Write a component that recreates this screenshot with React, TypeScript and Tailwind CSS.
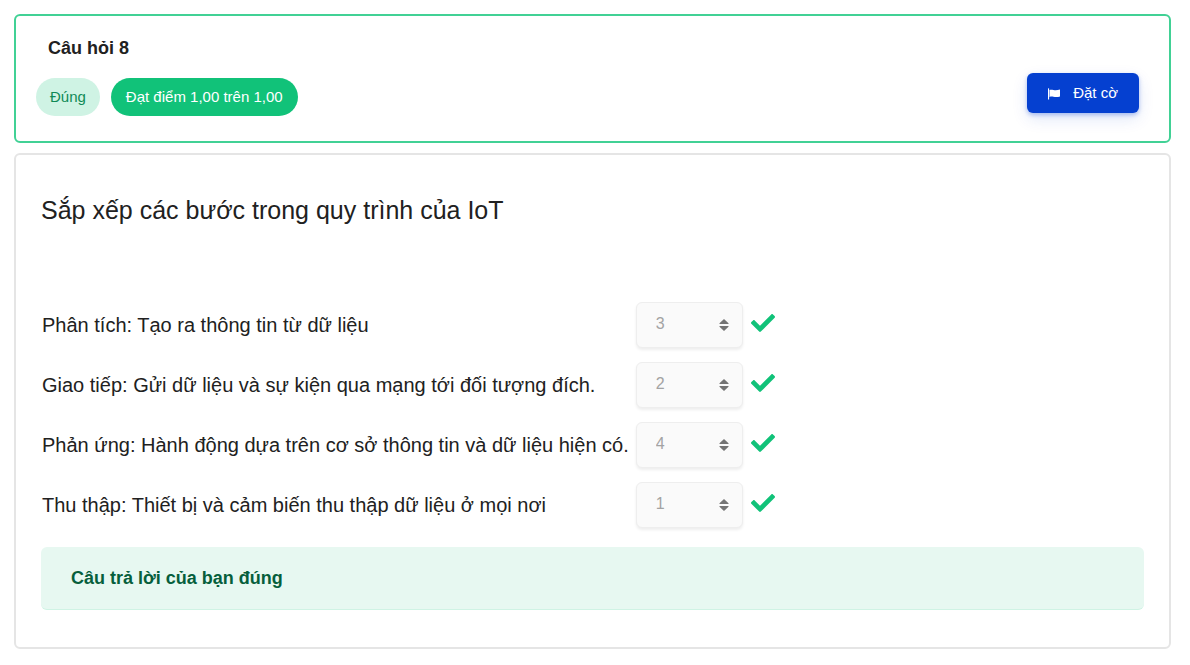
import { useId } from 'react';

type Step = { text: string; answer: number };

const steps: Step[] = [
  { text: 'Phân tích: Tạo ra thông tin từ dữ liệu', answer: 3 },
  { text: 'Giao tiếp: Gửi dữ liệu và sự kiện qua mạng tới đối tượng đích.', answer: 2 },
  { text: 'Phản ứng: Hành động dựa trên cơ sở thông tin và dữ liệu hiện có.', answer: 4 },
  { text: 'Thu thập: Thiết bị và cảm biến thu thập dữ liệu ở mọi nơi', answer: 1 },
];

function FlagIcon() {
  return (
    <svg viewBox="0 0 12 12" className="mt-[2px] h-3 w-3" fill="currentColor" aria-hidden="true">
      <path d="M0 0.4Q0.6 0 1.1 0.4V11.6H0Z" />
      <path d="M1.5 2.1C2.8 1.4 4 1.7 5.4 2C7.6 2.4 9.6 2.2 12 1.5V8.5C9.8 9.1 7.6 9.2 5.4 8.7C4 8.4 2.8 8.4 1.5 8.9Z" />
    </svg>
  );
}

function CheckIcon() {
  return (
    <svg viewBox="0 64 512 384" className="mb-1 h-[18px] w-6 shrink-0" fill="#11c279" role="img" aria-label="Đúng">
      <path d="M173.898 439.404l-166.4-166.4c-9.997-9.997-9.997-26.206 0-36.204l36.203-36.204c9.997-9.998 26.207-9.998 36.204 0L192 312.69 432.095 72.596c9.997-9.997 26.207-9.997 36.204 0l36.203 36.204c9.997 9.997 9.997 26.206 0 36.204l-294.4 294.401c-9.998 9.997-26.207 9.997-36.204-.001z" />
    </svg>
  );
}

function SortIcon() {
  return (
    <svg
      viewBox="0 0 10 12"
      className="pointer-events-none col-start-1 row-start-1 mr-[14px] h-3 w-[10px] justify-self-end"
      fill="#757575"
      aria-hidden="true"
    >
      <path d="M5 0L9.5 4.2V5H0.5V4.2ZM0.5 7H9.5V7.8L5 12L0.5 7.8Z" />
    </svg>
  );
}

function AnswerRow({ step }: { step: Step }) {
  const id = useId();
  return (
    <tr>
      <td className="h-[60px] pr-[7px] align-middle">
        <label htmlFor={id}>{step.text}</label>
      </td>
      <td className="h-[60px] align-middle">
        <div className="flex items-center gap-2">
          <div className="grid w-[107px] items-center">
            <select
              id={id}
              disabled
              defaultValue={step.answer}
              className="col-start-1 row-start-1 h-[46px] w-full appearance-none rounded-md border border-[#eeeeee] bg-[#fafafa] pr-8 pb-[2px] pl-[19px] text-base text-[#a3a3a3] opacity-100 shadow-[0_2px_3px_rgba(0,0,0,0.07)]"
            >
              {[1, 2, 3, 4].map((n) => (
                <option key={n} value={n}>
                  {n}
                </option>
              ))}
            </select>
            <SortIcon />
          </div>
          <CheckIcon />
        </div>
      </td>
    </tr>
  );
}

export default function App() {
  return (
    <main className="flex flex-col gap-[10px] bg-white py-[14px] pr-[19px] pl-[14px] font-['Liberation_Sans',Arial,sans-serif] text-[#212121]">
      <header className="flex items-end justify-between rounded-md border-2 border-[#41d195] pt-5 pr-[30px] pb-[25px] pl-5">
        <div>
          <h2 className="pl-3 text-lg leading-6 font-bold">Câu hỏi 8</h2>
          <div className="mt-[18px] flex gap-[11px] text-[15px] leading-[38px]">
            <span className="rounded-full bg-[#cff3e4] px-[14px] text-[#0f8a57]">Đúng</span>
            <span className="rounded-full bg-[#11c279] px-[15px] text-white">Đạt điểm 1,00 trên 1,00</span>
          </div>
        </div>
        <button
          type="button"
          className="mb-[3px] flex h-10 items-center gap-[13px] rounded-md bg-[#0540d0] px-[21px] text-[15px] text-white shadow-[0_2px_4px_rgba(5,64,208,0.3),0_6px_16px_rgba(5,64,208,0.12)]"
        >
          <FlagIcon />
          Đặt cờ
        </button>
      </header>

      <section className="rounded-md border-2 border-[#e5e5e5] px-[25px] py-[37px]">
        <h1 className="text-[25px] leading-9">Sắp xếp các bước trong quy trình của IoT</h1>
        <table className="mt-[67px] ml-px border-collapse text-xl">
          <tbody>
            {steps.map((step) => (
              <AnswerRow key={step.answer} step={step} />
            ))}
          </tbody>
        </table>
        <div className="mt-3 rounded-md border-b border-[#cff3e4] bg-[#e7f8f1] px-[30px] py-[19px] text-lg leading-6 font-bold text-[#065f3c]">
          Câu trả lời của bạn đúng
        </div>
      </section>
    </main>
  );
}
